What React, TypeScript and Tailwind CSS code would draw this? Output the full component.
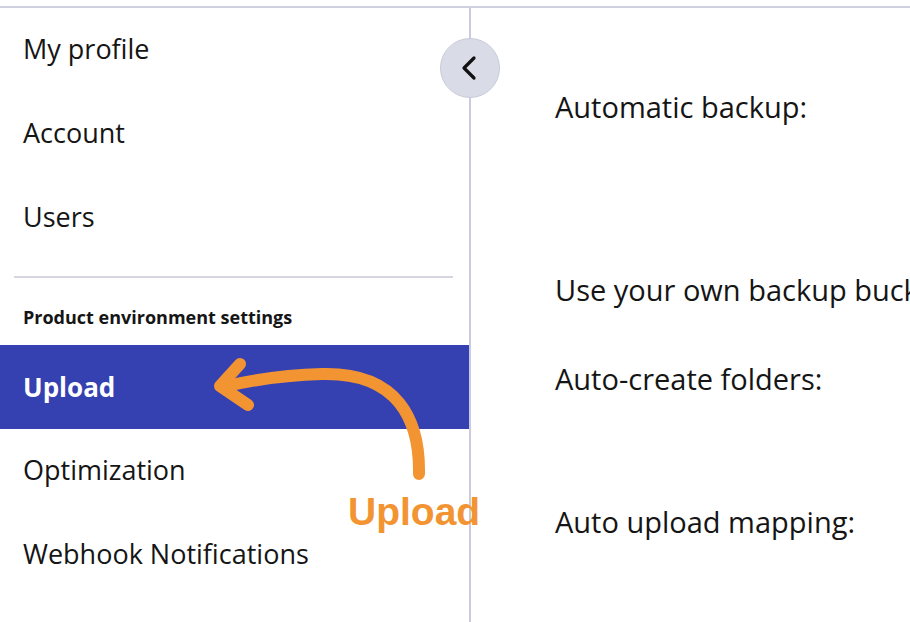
import React from "react";

const navTop = ["My profile", "Account", "Users"];
const navBottom = ["Optimization", "Webhook Notifications"];
const labels = [
  { text: "Automatic backup:", cls: "h-[183px]" },
  { text: "Use your own backup bucket:", cls: "h-[89px]" },
  { text: "Auto-create folders:", cls: "h-[143px]" },
  { text: "Auto upload mapping:", cls: "h-[60px]" },
];

const NavItem = ({ label }: { label: string }) => (
  <div className="h-[84px] flex items-center pl-[23px] pb-[1px] text-[27px] text-[#151515]">
    {label}
  </div>
);

export default function App() {
  return (
    <div
      className="relative w-[910px] h-[622px] overflow-hidden bg-white pt-[6px]"
      style={{ fontFamily: '"Open Sans", "Noto Sans", sans-serif' }}
    >
      <div className="flex h-full border-t-2 border-[#cfd1e0]">
        <aside className="w-[471px] shrink-0 border-r-2 border-[#cacbe0]">
          {navTop.map((l) => (
            <NavItem key={l} label={l} />
          ))}
          <div className="mx-[14px] mr-[16px] mt-[16px] border-t-2 border-[#d5d6e0]" />
          <div className="pl-[23px] pt-[26px] pb-[14px] text-[18px] font-bold text-[#151515]">
            Product environment settings
          </div>
          <div className="h-[84px] flex items-center pl-[23px] bg-[#3540b1] text-[26px] font-bold text-white">
            Upload
          </div>
          {navBottom.map((l) => (
            <NavItem key={l} label={l} />
          ))}
        </aside>
        <main className="flex-1 pl-[84px] pt-[81px] text-[29px] leading-[36px] text-[#151515] whitespace-nowrap">
          {labels.map((l) => (
            <div key={l.text} className={l.cls}>
              {l.text}
            </div>
          ))}
        </main>
      </div>

      <button className="absolute left-[440px] top-[38px] w-[60px] h-[60px] rounded-full bg-[#d9dbe6] border border-[#c8cad9] flex items-center justify-center">
        <svg width="22" height="26" viewBox="0 0 22 26" fill="none">
          <path
            d="M15 3 L5 13 L15 23"
            stroke="#111"
            strokeWidth="3.2"
            strokeLinecap="round"
            strokeLinejoin="round"
          />
        </svg>
      </button>

      <svg
        className="absolute left-0 top-0 pointer-events-none"
        width="910"
        height="622"
        viewBox="0 0 910 622"
        fill="none"
      >
        <path
          d="M419 474 C420 420 398 372 322 374 C285 375 252 380 222 387"
          stroke="#f39433"
          strokeWidth="12"
          strokeLinecap="round"
          strokeLinejoin="round"
        />
        <path
          d="M240 364 L220 386 L248 405"
          stroke="#f39433"
          strokeWidth="12"
          strokeLinecap="round"
          strokeLinejoin="round"
        />
      </svg>
      <div
        className="absolute left-[348px] top-[492px] text-[39px] font-bold text-[#f39433] leading-none"
        style={{ fontFamily: '"Liberation Sans", Arial, sans-serif' }}
      >
        Upload
      </div>
    </div>
  );
}
